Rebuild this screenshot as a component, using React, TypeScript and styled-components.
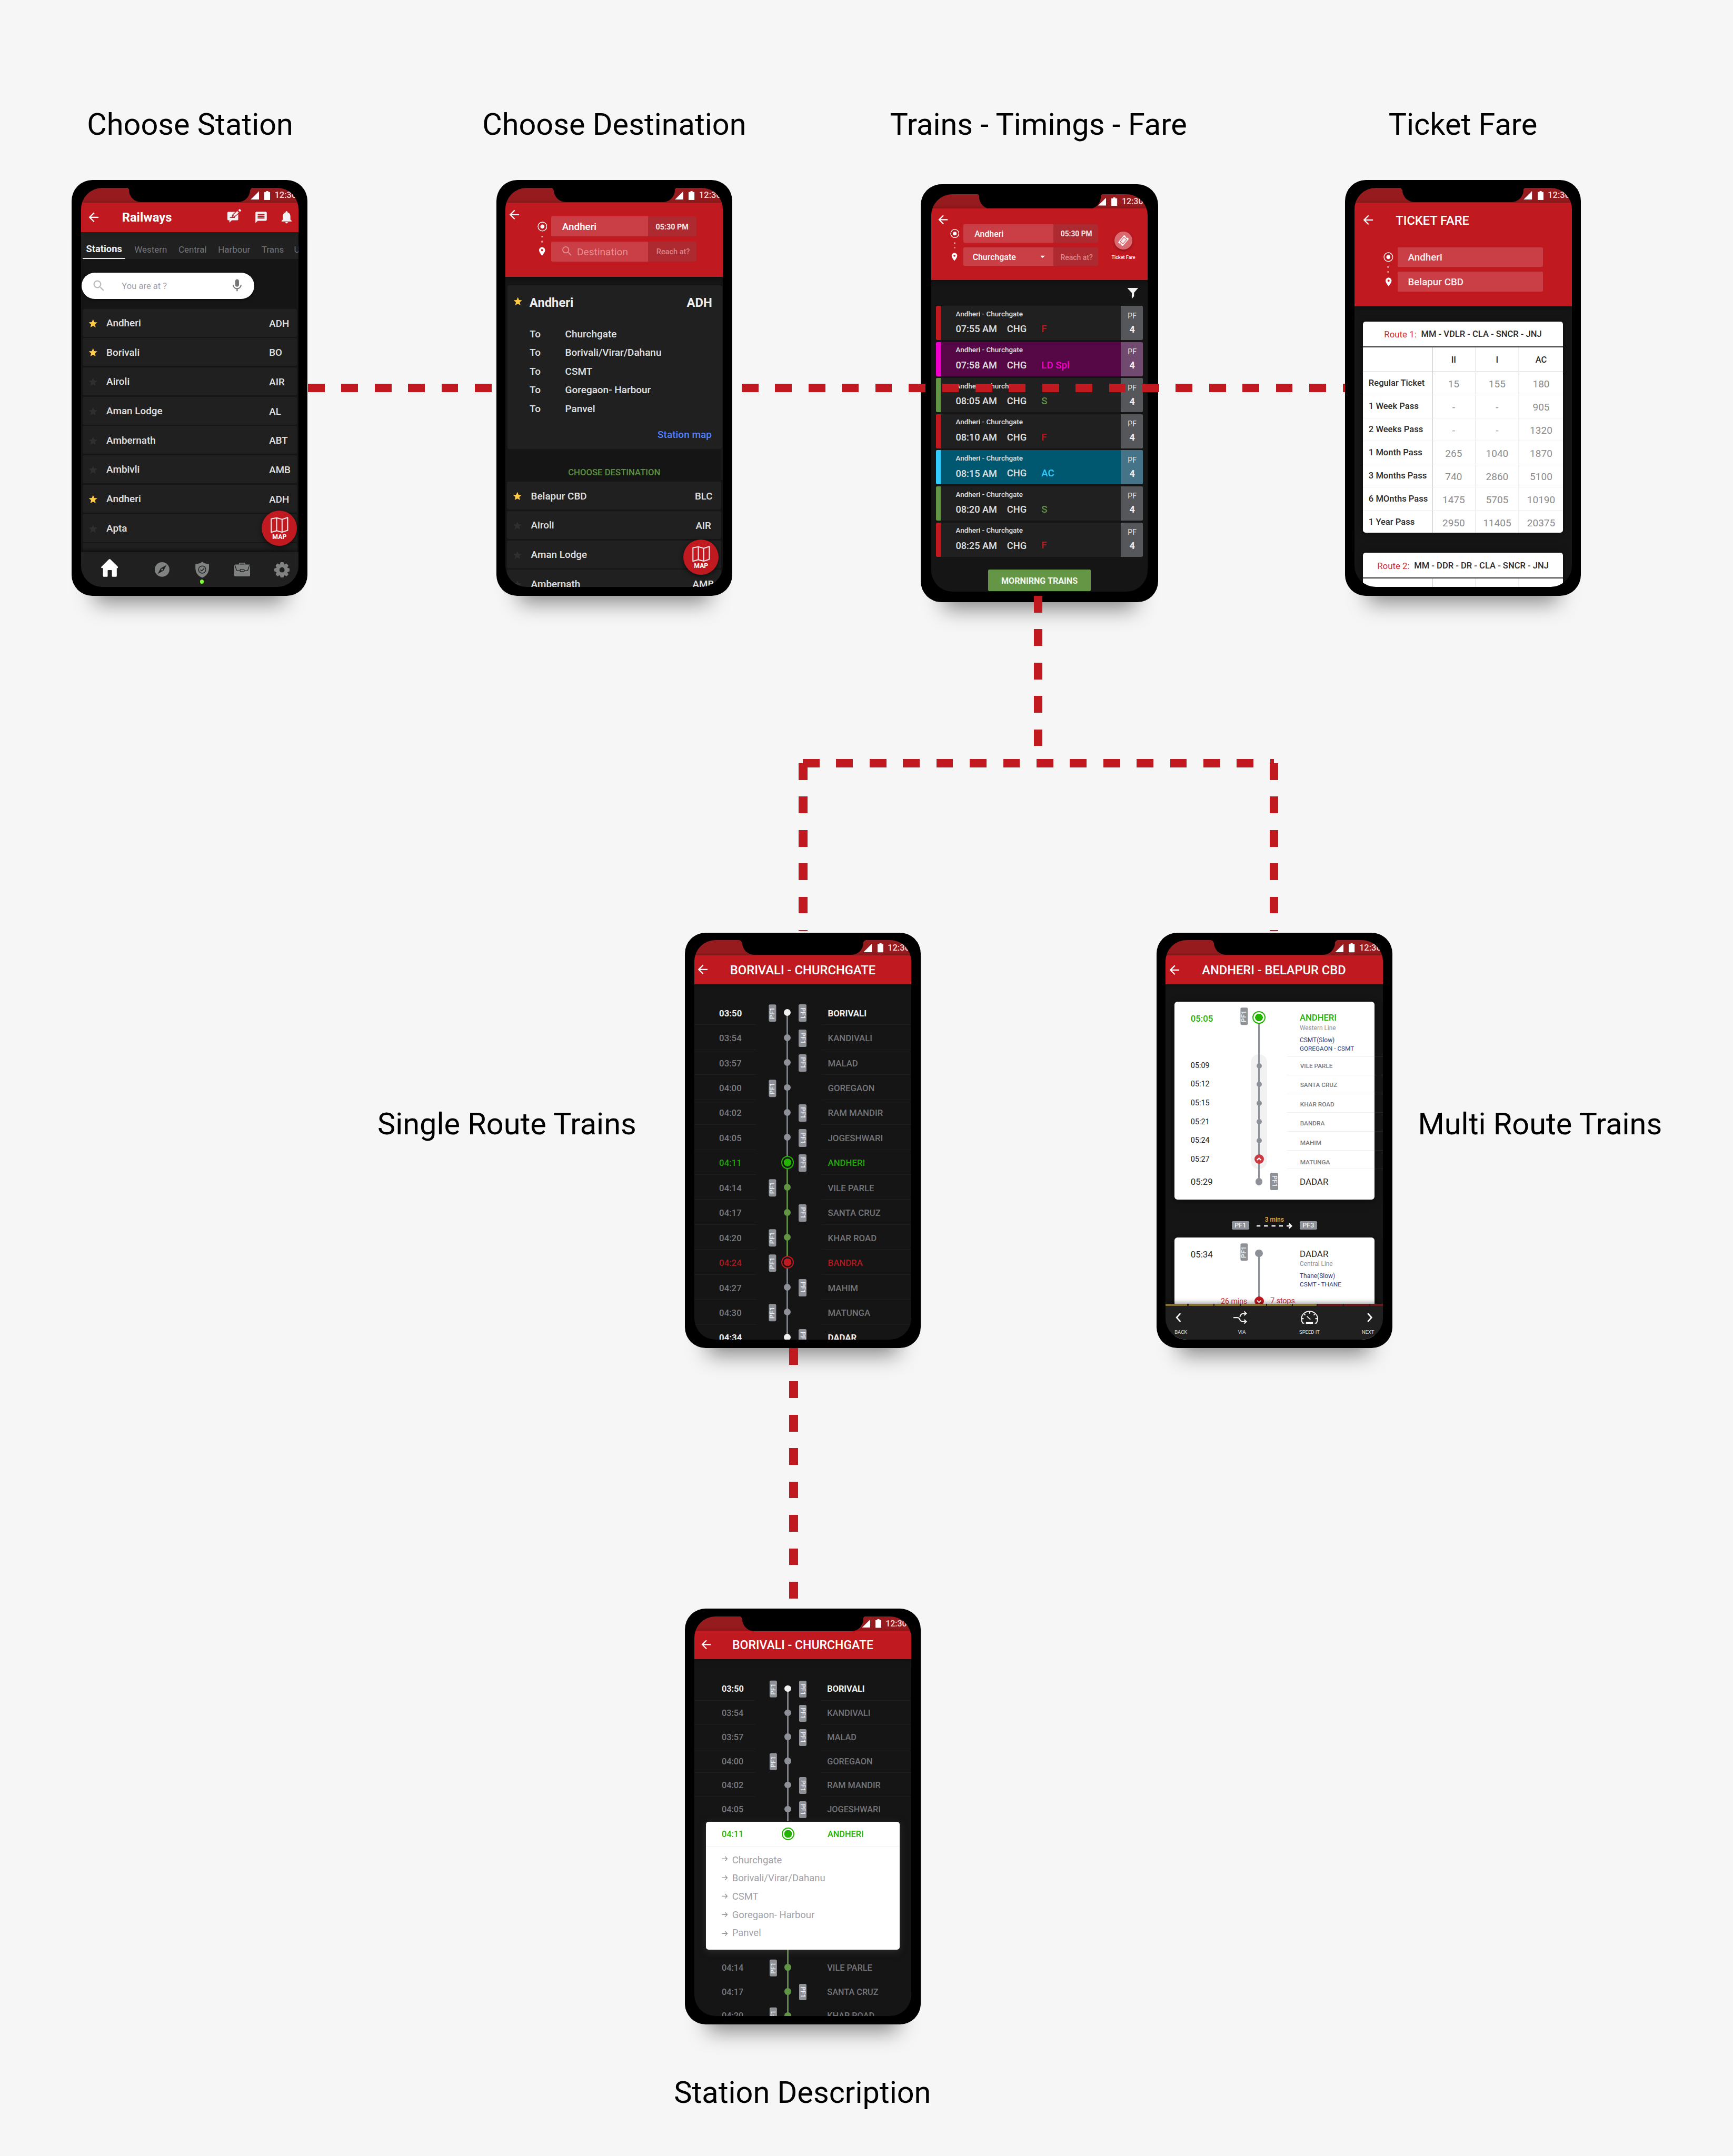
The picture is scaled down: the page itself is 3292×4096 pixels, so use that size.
import React from 'react';
import styled, { createGlobalStyle, css } from 'styled-components';
import {
  MdArrowBack,
  MdArrowDropDown,
  MdMessage,
  MdMic,
  MdNotifications,
  MdPlace,
  MdSearch,
  MdStar,
} from 'react-icons/md';

const RED = '#c01920';
const PANEL = '#202020';
const NIGHT = '#151515';
const GREEN = '#22b400';
const LEAF = '#629445';
const STEEL = '#8f9199';

const GlobalStyle = createGlobalStyle`
  html, body { margin: 0; padding: 0; background: #f6f6f6; }
  * { box-sizing: border-box; }
  svg { display: block; flex: none; }
`;

/* ---------- board ---------- */

const Board = styled.main`
  position: relative;
  width: 4568px;
  height: 5683px;
  zoom: 0.72071;
  overflow: hidden;
  background: #f6f6f6;
  font-family: Roboto, 'Liberation Sans', sans-serif;
`;

const Caption = styled.h2<{ $x: number; $y: number }>`
  position: absolute;
  left: ${(p) => p.$x}px;
  top: ${(p) => p.$y}px;
  transform: translate(-50%, -50%);
  margin: 0;
  font-size: 80px;
  line-height: 1;
  font-weight: 400;
  color: #000;
  white-space: nowrap;
`;

const Connector = styled.div<{ $x: number; $y: number; $len: number; $vertical?: boolean }>`
  position: absolute;
  left: ${(p) => p.$x}px;
  top: ${(p) => p.$y}px;
  width: ${(p) => (p.$vertical ? 23 : p.$len)}px;
  height: ${(p) => (p.$vertical ? p.$len : 23)}px;
  background: repeating-linear-gradient(
    ${(p) => (p.$vertical ? '180deg' : '90deg')},
    ${RED} 0 44px,
    transparent 44px 88px
  );
`;

const Phone = styled.section<{ $x: number; $y: number; $wide?: boolean }>`
  position: absolute;
  left: ${(p) => p.$x}px;
  top: ${(p) => p.$y}px;
  width: ${(p) => (p.$wide ? 625 : 621.5)}px;
  height: ${(p) => (p.$wide ? 1103 : 1096)}px;
  padding: ${(p) => (p.$wide ? '27px 28px' : '20.7px 24.5px')};
  background: #000;
  border-radius: 55px;
  box-shadow: 0 78px 52px -60px rgba(0, 0, 0, 0.45);
`;

const Screen = styled.div<{ $wide?: boolean }>`
  position: relative;
  display: flex;
  flex-direction: column;
  width: ${(p) => (p.$wide ? 569.5 : 573)}px;
  height: ${(p) => (p.$wide ? 1047 : 1053)}px;
  border-radius: 56px;
  overflow: hidden;
  background: ${NIGHT};
`;

const Notch = styled.div`
  position: absolute;
  top: 0;
  left: 126.5px;
  width: 319.5px;
  height: 38.7px;
  background: #000;
  border-radius: 0 0 32px 32px;
  &::before,
  &::after {
    content: '';
    position: absolute;
    top: 0;
    width: 6px;
    height: 6px;
  }
  &::before {
    left: -6px;
    background: radial-gradient(circle at 0 100%, transparent 5.5px, #000 6px);
  }
  &::after {
    right: -6px;
    background: radial-gradient(circle at 100% 100%, transparent 5.5px, #000 6px);
  }
`;

const StatusRow = styled.div<{ $start: number; $h: number }>`
  flex: none;
  display: flex;
  align-items: center;
  height: ${(p) => p.$h}px;
  padding-left: ${(p) => p.$start}px;
  padding-top: 1px;
  background: #961b1e;
`;

const StatusTime = styled.span<{ $size: number }>`
  margin-left: 11.5px;
  padding-top: 1px;
  font-size: ${(p) => p.$size}px;
  line-height: 1;
  font-weight: 500;
  color: #f4dcdd;
  white-space: nowrap;
`;

const Battery = styled.svg`
  margin-left: 14px;
`;

function StatusBar({ start = 446.5, compact = false }: { start?: number; compact?: boolean }) {
  return (
    <StatusRow $start={start} $h={compact ? 37.8 : 39.4}>
      <svg width={compact ? 22 : 22.5} height={compact ? 21.5 : 22.4} viewBox="0 0 22 22" preserveAspectRatio="none">
        <path d="M22 0V22H0Z" fill="#fff" />
      </svg>
      <Battery width={15.5} height={compact ? 23 : 23.8} viewBox="0 0 15.5 24" preserveAspectRatio="none">
        <path d="M1 2.4H5V0H10.5V2.4H14.5Q15.5 2.4 15.5 3.4V23Q15.5 24 14.5 24H1Q0 24 0 23V3.4Q0 2.4 1 2.4Z" fill="#fff" />
      </Battery>
      <StatusTime $size={compact ? 22.2 : 23}>12:30</StatusTime>
    </StatusRow>
  );
}

/* ---------- text ---------- */

const Text = styled.span<{ $s: number; $w?: number; $c?: string; $lh?: number }>`
  display: block;
  flex: none;
  padding-top: 1.7px;
  margin-bottom: -1.7px;
  font-size: ${(p) => p.$s}px;
  line-height: ${(p) => (p.$lh ? `${p.$lh}px` : 1)};
  font-weight: ${(p) => p.$w ?? 500};
  color: ${(p) => p.$c ?? '#e0e0e0'};
  white-space: nowrap;
`;

/* ---------- headers ---------- */

const TitleBar = styled.header<{ $h: number; $pad: number; $gap?: number; $center?: boolean }>`
  position: relative;
  flex: none;
  display: flex;
  align-items: center;
  height: ${(p) => p.$h}px;
  padding-left: ${(p) => p.$pad}px;
  background: ${RED};
  color: #fff;
  box-shadow: 0 2px 10px rgba(0, 0, 0, 0.35);
  ${(p) =>
    p.$center &&
    css`
      justify-content: center;
      padding-left: 0;
      & > svg:first-child {
        position: absolute;
        left: ${p.$pad}px;
      }
    `}
`;

const BarTitle = styled.h3<{ $s: number; $w?: number; $ml?: number }>`
  margin: 0 0 0 ${(p) => p.$ml ?? 0}px;
  padding-top: 3px;
  font-size: ${(p) => p.$s}px;
  line-height: 1;
  font-weight: ${(p) => p.$w ?? 500};
  color: #fff;
  white-space: nowrap;
`;

const BarActions = styled.div`
  display: flex;
  align-items: center;
  margin-left: 147px;
  color: #f2f2f2;
`;

const ActionEdit = styled.svg`
  margin-top: -8px;
`;
const ActionMessage = styled(MdMessage)`
  margin-left: 34px;
`;
const ActionBell = styled(MdNotifications)`
  margin-left: 28.5px;
`;

const SearchHeader = styled.header<{ $h: number }>`
  position: relative;
  z-index: 1;
  flex: none;
  display: flex;
  align-items: flex-start;
  height: ${(p) => p.$h}px;
  background: ${RED};
  color: #fff;
  box-shadow: 0 3px 12px rgba(0, 0, 0, 0.4);
`;

const BackSlot = styled.div<{ $left: number; $top: number }>`
  margin: ${(p) => p.$top}px 0 0 ${(p) => p.$left}px;
`;

const MarkerColumn = styled.div<{ $left: number; $top: number; $k: number }>`
  display: flex;
  flex-direction: column;
  align-items: center;
  flex: none;
  width: ${(p) => 26 * p.$k}px;
  margin: ${(p) => p.$top}px 0 0 ${(p) => p.$left}px;
`;

const MarkerDot = styled.i<{ $mt: number }>`
  width: 5px;
  height: 5px;
  margin-top: ${(p) => p.$mt}px;
  border-radius: 50%;
  background: #e08f92;
`;

const MarkerPin = styled(MdPlace)<{ $mt: number }>`
  margin-top: ${(p) => p.$mt}px;
`;

function Markers({ left, top, k = 1 }: { left: number; top: number; k?: number }) {
  return (
    <MarkerColumn $left={left} $top={top} $k={k}>
      <svg width={26 * k} height={26 * k} viewBox="0 0 26 26">
        <circle cx="13" cy="13" r="11.6" fill="none" stroke="#fff" strokeWidth="1.9" />
        <circle cx="13" cy="13" r="5.3" fill="#fff" />
      </svg>
      <MarkerDot $mt={11.2 * k} />
      <MarkerDot $mt={8 * k} />
      <MarkerPin $mt={10 * k} size={27 * k} />
    </MarkerColumn>
  );
}

const Fields = styled.div<{ $left: number; $top: number; $gap: number }>`
  display: flex;
  flex-direction: column;
  gap: ${(p) => p.$gap}px;
  margin: ${(p) => p.$top}px 0 0 ${(p) => p.$left}px;
`;

const Field = styled.div<{ $h: number }>`
  display: flex;
  height: ${(p) => p.$h}px;
  border-radius: 3px;
  overflow: hidden;
`;

const FieldMain = styled.div<{ $w: number; $pl: number }>`
  display: flex;
  align-items: center;
  width: ${(p) => p.$w}px;
  padding-left: ${(p) => p.$pl}px;
  background: #ca3e45;
  color: #e08a8f;
`;

const FieldSide = styled.div<{ $w: number; $pl: number }>`
  display: flex;
  align-items: center;
  width: ${(p) => p.$w}px;
  padding: 1px 0 0 ${(p) => p.$pl}px;
  background: #ad2a30;
`;

const FieldHint = styled(Text)`
  margin-left: 9px;
`;

const FieldCaret = styled(MdArrowDropDown)`
  margin-left: auto;
  margin-right: 14.5px;
  color: #fff;
`;

/* ---------- screen 1: stations ---------- */

const Tabs = styled.nav`
  flex: none;
  display: flex;
  align-items: stretch;
  gap: 30px;
  height: 71.3px;
  padding-left: 4px;
  background: ${PANEL};
  overflow: hidden;
`;

const Tab = styled.span<{ $active?: boolean; $last?: boolean }>`
  flex: none;
  display: flex;
  align-items: center;
  padding-top: 24px;
  margin-left: ${(p) => (p.$last ? -3 : 0)}px;
  font-size: 23.5px;
  line-height: 1;
  color: #74757b;
  white-space: nowrap;
  ${(p) =>
    p.$active &&
    css`
      width: 112.7px;
      margin-right: -6px;
      padding: 23px 0 0 9.5px;
      border-bottom: 4px solid #e8e8e8;
      font-size: 25.4px;
      font-weight: 700;
      color: #f0f0f0;
    `}
`;

const SearchPill = styled.div`
  flex: none;
  display: flex;
  align-items: center;
  width: 454.7px;
  height: 68.5px;
  margin: 36.3px 0 26.4px 2px;
  padding: 0 25px 0 26px;
  border-radius: 35px;
  background: #fff;
  box-shadow: 0 2px 8px rgba(0, 0, 0, 0.6);
  color: #bdbdbd;
`;

const PillText = styled(Text)`
  margin-left: 41px;
  flex: 1;
`;

const StationList = styled.ul`
  flex: 1 1 0;
  min-height: 0;
  overflow: hidden;
  display: flex;
  flex-direction: column;
  gap: 3.6px;
  margin: 0;
  padding: 0 4px;
  list-style: none;
`;

const StationItem = styled.li`
  flex: none;
  display: flex;
  align-items: center;
  height: 73.7px;
  border-radius: 4px;
  background: ${PANEL};
`;

const StarMark = styled(MdStar)<{ $on?: boolean }>`
  margin: 4px 0 0 14px;
  color: ${(p) => (p.$on ? '#ffca44' : '#2f2f2f')};
`;

const StationName = styled(Text)<{ $ml?: number }>`
  width: ${(p) => p.$ml ?? 429}px;
  margin-left: 22px;
`;

const StationCode = styled(Text)`
  margin-top: 2px;
`;

function Station({ on, name, code, nameWidth }: { on?: boolean; name: string; code: string; nameWidth?: number }) {
  return (
    <StationItem>
      <StarMark size={27} $on={on} />
      <StationName $s={26.2} $ml={nameWidth}>{name}</StationName>
      <StationCode $s={26}>{code}</StationCode>
    </StationItem>
  );
}

const MapButton = styled.button<{ $x: number; $y: number }>`
  position: absolute;
  left: ${(p) => p.$x}px;
  top: ${(p) => p.$y}px;
  display: flex;
  flex-direction: column;
  align-items: center;
  width: 92.8px;
  height: 92.8px;
  padding: 16.5px 0 0;
  border: 0;
  border-radius: 50%;
  background: ${RED};
  box-shadow: 0 4px 14px rgba(0, 0, 0, 0.6);
  font-family: inherit;
  gap: 0;
`;

function MapFab({ x, y }: { x: number; y: number }) {
  return (
    <MapButton $x={x} $y={y}>
      <svg width="47" height="42" viewBox="0 0 47 42" fill="none" stroke="#f6e9ea" strokeWidth="2.8" strokeLinejoin="round">
        <path d="M1.8 5.2L16 2.4L30.3 6.4L45 1.8V35.3L30.3 40.4L16 36.4L1.8 40.6Z" />
        <path d="M16 2.4V36.4M30.3 6.4V40.4" />
      </svg>
      <Text $s={17} $w={700} $c="#fff">MAP</Text>
    </MapButton>
  );
}

const BottomNav = styled.nav`
  position: relative;
  flex: none;
  display: flex;
  align-items: flex-start;
  height: 91.8px;
  padding-left: 52.7px;
  background: ${PANEL};
  box-shadow: 0 -4px 12px rgba(0, 0, 0, 0.65);
`;

const NavIcon = styled.svg<{ $ml: number; $mt: number }>`
  margin: ${(p) => p.$mt}px 0 0 ${(p) => p.$ml}px;
`;

const OnlineDot = styled.i`
  position: absolute;
  left: 314px;
  top: 72.3px;
  width: 10px;
  height: 10px;
  border-radius: 50%;
  background: #7dfb33;
`;

function StationsScreen() {
  return (
    <Screen>
      <StatusBar />
      <TitleBar $h={77.3} $pad={14}>
        <MdArrowBack size={38.5} />
        <BarTitle $s={33} $w={700} $ml={55.5}>Railways</BarTitle>
        <BarActions>
          <ActionEdit width="36.5" height="36.5" viewBox="0 0 36.5 36.5">
            <path d="M2.5 7.5H21L28.5 14V27.5Q28.5 29.7 26.5 29.7H11.5L5.2 36V29.7H2.2Q0 29.7 0 27.5V9.7Q0 7.5 2.5 7.5Z" fill="#f2f2f2" />
            <path d="M6.5 22.6H19.5" stroke={RED} strokeWidth="2" />
            <path d="M12 21.8L14 15.4L26 4L31.4 9.6L19 20.6Z" fill="#f2f2f2" stroke={RED} strokeWidth="2" />
            <path d="M15 15.4L19 19.6" stroke={RED} strokeWidth="1.5" />
            <path d="M28.6 3.1L31.2.6Q32.4-.2 33.4.8L35.6 3Q36.6 4.2 35.6 5.2L33 7.6Z" fill="#f2f2f2" />
          </ActionEdit>
          <ActionMessage size={36} />
          <ActionBell size={40} />
        </BarActions>
      </TitleBar>
      <Tabs>
        <Tab $active>Stations</Tab>
        <Tab>Western</Tab>
        <Tab>Central</Tab>
        <Tab>Harbour</Tab>
        <Tab>Trans</Tab>
        <Tab $last>U</Tab>
      </Tabs>
      <SearchPill>
        <MdSearch size={38.5} />
        <PillText $s={23} $w={400} $c="#9fa0a8">You are at ?</PillText>
        <MdMic size={40} color="#757575" />
      </SearchPill>
      <StationList>
        <Station on name="Andheri" code="ADH" />
        <Station on name="Borivali" code="BO" />
        <Station name="Airoli" code="AIR" />
        <Station name="Aman Lodge" code="AL" />
        <Station name="Ambernath" code="ABT" />
        <Station name="Ambivli" code="AMB" />
        <Station on name="Andheri" code="ADH" />
        <Station name="Apta" code="" />
        <StationItem />
      </StationList>
      <BottomNav>
        <NavIcon $ml={0} $mt={17.6} width="45.3" height="47" viewBox="0 0 45.3 47" fill="#fff">
          <path d="M20.8.8Q22.6-.6 24.4.8L44.6 20.6Q46.2 24 43 24H41.4V44.6Q41.4 47 39 47H30.6Q28.6 47 28.6 45V30.6Q28.6 29 27 29H19Q17.4 29 17.4 30.6V45Q17.4 47 15.4 47H7.4Q5 47 5 44.6V24H2.4Q-1 24 .8 20.6Z" />
        </NavIcon>
        <NavIcon $ml={96.3} $mt={26.4} width="38.6" height="38.6" viewBox="-19.3 -19.3 38.6 38.6">
          <circle r="19.3" fill="#808282" />
          <path d="M11.8-11.6L3.6 3.4L-11.6 11.6L-3.6-3.4Z" fill={PANEL} />
          <circle r="2.4" fill="#808282" />
        </NavIcon>
        <NavIcon $ml={67.8} $mt={24.8} width="36.4" height="42.2" viewBox="0 0 36.4 42.2">
          <path d="M18.2 0C22 4 28 6 35.8 6.2C37.4 22 35 36 18.2 42.2C1.4 36-1 22 .6 6.2C8.4 6 14.4 4 18.2 0Z" fill="#808282" />
          <circle cx="18.2" cy="21" r="9.6" fill="none" stroke={PANEL} strokeWidth="2" />
          <path d="M13.4 21.2L16.8 24.6L23.4 17.8" fill="none" stroke={PANEL} strokeWidth="2.2" />
        </NavIcon>
        <NavIcon $ml={66.8} $mt={27.6} width="41.8" height="36" viewBox="0 0 41.8 36">
          <path d="M13.4 6V3Q13.4 1.2 15.2 1.2H26.4Q28.2 1.2 28.2 3V6" fill="none" stroke="#808282" strokeWidth="2.2" />
          <rect x="0" y="5" width="41.8" height="31" rx="2.4" fill="#808282" />
          <path d="M1.6 6.4L6 19.6Q6.6 21 8 21H15.4M26.4 21H33.8Q35.2 21 35.8 19.6L40.2 6.4" fill="none" stroke={PANEL} strokeWidth="2" />
          <rect x="15.6" y="18" width="10.6" height="5.6" rx="1" fill="#808282" stroke={PANEL} strokeWidth="1.8" />
        </NavIcon>
        <NavIcon $ml={63.4} $mt={25.9} width="40.8" height="40.8" viewBox="-20.4 -20.4 40.8 40.8">
          {[0, 45, 90, 135].map((a) => (
            <path key={a} d="M-4.2-19Q-4-20.4-2.6-20.4H2.6Q4-20.4 4.2-19L6-12V12L4.2 19Q4 20.4 2.6 20.4H-2.6Q-4 20.4-4.2 19L-6 12V-12Z" transform={`rotate(${a})`} fill="#808282" />
          ))}
          <circle r="15.6" fill="#808282" />
          <circle r="6.8" fill={PANEL} />
        </NavIcon>
        <OnlineDot />
      </BottomNav>
      <MapFab x={476.7} y={851.8} />
      <Notch />
    </Screen>
  );
}

/* ---------- screen 2: destination ---------- */

const StationCard = styled.article`
  flex: none;
  height: 431.5px;
  margin: 21.4px 3.6px 0 4.6px;
  border-radius: 5px;
  background: ${PANEL};
`;

const CardHead = styled.div`
  display: flex;
  align-items: center;
  height: 92px;
  padding: 0 25px 0 14.5px;
`;

const HeadStar = styled(MdStar)`
  margin: -5px 17px 0 0;
  color: #ffca44;
`;

const HeadCode = styled(Text)`
  margin-left: auto;
`;

const ToList = styled.dl`
  margin: 11.5px 0 0;
  padding: 0 0 0 58.6px;
`;

const ToRow = styled.div`
  display: flex;
  align-items: center;
  height: 49.4px;
`;

const ToLabel = styled(Text)`
  width: 94px;
`;

const MapLink = styled(Text)`
  margin: 28px 26px 0 0;
  text-align: right;
`;

const SectionLabel = styled(Text)`
  height: 86.9px;
  margin-bottom: 0;
  padding-top: 50.5px;
  text-align: center;
`;

function DestinationScreen() {
  return (
    <Screen>
      <StatusBar />
      <SearchHeader $h={196}>
        <BackSlot $left={4.2} $top={12.4}>
          <MdArrowBack size={38.5} />
        </BackSlot>
        <Markers left={41} top={49.8} />
        <Fields $left={11.1} $top={36.8} $gap={13.4}>
          <Field $h={52.4}>
            <FieldMain $w={255.2} $pl={28.4}>
              <Text $s={26.1} $c="#fff">Andheri</Text>
            </FieldMain>
            <FieldSide $w={127.7} $pl={19.8}>
              <Text $s={19.9} $w={700} $c="#f3e4e5">05:30 PM</Text>
            </FieldSide>
          </Field>
          <Field $h={52.4}>
            <FieldMain $w={255.2} $pl={24.5}>
              <MdSearch size={34} />
              <FieldHint $s={26.6} $w={400} $c="#e58e92">Destination</FieldHint>
            </FieldMain>
            <FieldSide $w={127.7} $pl={21.6}>
              <Text $s={20.1} $c="#dc8488">Reach at?</Text>
            </FieldSide>
          </Field>
        </Fields>
      </SearchHeader>
      <StationCard>
        <CardHead>
          <HeadStar size={27} />
          <Text $s={33} $w={700} $c="#eee">Andheri</Text>
          <HeadCode $s={33} $w={700} $c="#eee">ADH</HeadCode>
        </CardHead>
        <ToList>
          {['Churchgate', 'Borivali/Virar/Dahanu', 'CSMT', 'Goregaon- Harbour', 'Panvel'].map((t) => (
            <ToRow key={t}>
              <ToLabel $s={26.3}>To</ToLabel>
              <Text $s={26.3}>{t}</Text>
            </ToRow>
          ))}
        </ToList>
        <MapLink $s={26.4} $c="#5281ff">Station map</MapLink>
      </StationCard>
      <SectionLabel $s={23.2} $c="#5b9140">CHOOSE DESTINATION</SectionLabel>
      <StationList>
        <Station on name="Belapur CBD" code="BLC" nameWidth={432} />
        <Station name="Airoli" code="AIR" nameWidth={434} />
        <Station name="Aman Lodge" code="" />
        <Station name="Ambernath" code="AMB" nameWidth={426} />
      </StationList>
      <MapFab x={469} y={928} />
      <Notch />
    </Screen>
  );
}

/* ---------- screen 3: trains ---------- */

const TicketLink = styled.div`
  display: flex;
  flex-direction: column;
  align-items: center;
  width: 64px;
  margin: 61px 0 0 34px;
`;

const TicketDisc = styled.div`
  display: grid;
  place-items: center;
  width: 46.6px;
  height: 46.6px;
  margin-bottom: 13.4px;
  border-radius: 50%;
  background: #da6a70;
  box-shadow: 0 3px 8px rgba(0, 0, 0, 0.3);
`;

const FilterRow = styled.div`
  flex: none;
  height: 68.4px;
  padding: 21.4px 0 0 517.6px;
`;

const TrainList = styled.div`
  flex: none;
  display: flex;
  flex-direction: column;
  gap: 4.85px;
  padding: 0 12px;
`;

const TrainRow = styled.div<{ $bar: string; $bg: string }>`
  display: flex;
  height: 90.3px;
  border-left: 13px solid ${(p) => p.$bar};
  border-radius: 3px;
  background: ${(p) => p.$bg};
  overflow: hidden;
`;

const TrainInfo = styled.div`
  flex: 1;
  padding: 10.3px 0 0 39.5px;
`;

const TrainLine = styled.div`
  display: flex;
  align-items: center;
  height: 26px;
  margin-top: 17.7px;
`;

const TrainTime = styled(Text)`
  width: 135px;
`;
const TrainCode = styled(Text)`
  width: 91px;
`;

const PlatformCell = styled.div<{ $bg: string }>`
  display: flex;
  flex-direction: column;
  align-items: center;
  width: 59px;
  padding: 14.3px 0 0 2px;
  gap: 13.8px;
  background: ${(p) => p.$bg};
`;

const MorningButton = styled.button`
  flex: none;
  align-self: center;
  display: flex;
  align-items: center;
  justify-content: center;
  width: 269.5px;
  height: 57px;
  margin-top: 33.6px;
  padding: 2px 0 0;
  border: 0;
  border-radius: 3px;
  background: #649646;
  font-family: inherit;
`;

const kinds = {
  F: { bar: RED, bg: PANEL, pf: '#56575b', label: RED },
  S: { bar: LEAF, bg: PANEL, pf: '#56575b', label: LEAF },
  'LD Spl': { bar: '#ee00ca', bg: '#560745', pf: '#714a70', label: '#ee00ca' },
  AC: { bar: '#33ccff', bg: '#005870', pf: '#457388', label: '#33ccff' },
};

const trains: [string, keyof typeof kinds][] = [
  ['07:55 AM', 'F'],
  ['07:58 AM', 'LD Spl'],
  ['08:05 AM', 'S'],
  ['08:10 AM', 'F'],
  ['08:15 AM', 'AC'],
  ['08:20 AM', 'S'],
  ['08:25 AM', 'F'],
];

function TrainsScreen() {
  return (
    <Screen $wide>
      <StatusBar start={438.8} compact />
      <SearchHeader $h={188.2}>
        <BackSlot $left={12} $top={11.4}>
          <MdArrowBack size={37} />
        </BackSlot>
        <Markers left={0} top={53.8} k={0.93} />
        <Fields $left={10.5} $top={40.9} $gap={11.8}>
          <Field $h={49.4}>
            <FieldMain $w={238} $pl={30}>
              <Text $s={22} $c="#fff">Andheri</Text>
            </FieldMain>
            <FieldSide $w={118.4} $pl={19}>
              <Text $s={19.1} $w={700} $c="#f3e4e5">05:30 PM</Text>
            </FieldSide>
          </Field>
          <Field $h={49.4}>
            <FieldMain $w={238} $pl={25}>
              <Text $s={22.1} $c="#fff">Churchgate</Text>
              <FieldCaret size={29} />
            </FieldMain>
            <FieldSide $w={118.4} $pl={18.6}>
              <Text $s={19.4} $c="#dc8488">Reach at?</Text>
            </FieldSide>
          </Field>
        </Fields>
        <TicketLink>
          <TicketDisc>
            <svg width="28" height="28" viewBox="-14 -14 28 28">
              <g transform="rotate(-50)">
                <path d="M-12.6-8H12.6V-3A3.2 3.2 0 0 0 12.6 3V8H-12.6V3A3.2 3.2 0 0 0-12.6-3Z" fill="#fff" />
                <rect x="-7.6" y="-4.8" width="15.2" height="9.6" fill="#f6e6e7" stroke="#da6a70" strokeWidth="1.8" />
              </g>
            </svg>
          </TicketDisc>
          <Text $s={12.6} $c="#fff">Ticket Fare</Text>
        </TicketLink>
      </SearchHeader>
      <FilterRow>
        <svg width="27" height="28" viewBox="0 0 27 28">
          <path d="M1 0H26Q27.4.2 26.6 1.6L17 12.4V21Q17 22 16.4 22.6L12.6 27Q11 28.4 11 26.6V12.8L.4 1.6Q-.4.2 1 0Z" fill="#f2f2f2" />
        </svg>
      </FilterRow>
      <TrainList>
        {trains.map(([time, kind]) => {
          const k = kinds[kind];
          return (
            <TrainRow key={time} $bar={k.bar} $bg={k.bg}>
              <TrainInfo>
                <Text $s={18.7}>Andheri - Churchgate</Text>
                <TrainLine>
                  <TrainTime $s={25.2}>{time}</TrainTime>
                  <TrainCode $s={25.4}>CHG</TrainCode>
                  <Text $s={26} $c={k.label}>{kind}</Text>
                </TrainLine>
              </TrainInfo>
              <PlatformCell $bg={k.pf}>
                <Text $s={19.5} $w={400}>PF</Text>
                <Text $s={25} $w={700} $c="#eee">4</Text>
              </PlatformCell>
            </TrainRow>
          );
        })}
      </TrainList>
      <MorningButton>
        <Text $s={22.4} $w={700} $c="#f4f8f1">MORNIRNG TRAINS</Text>
      </MorningButton>
      <Notch />
    </Screen>
  );
}

/* ---------- screen 4: fares ---------- */

const FareHeader = styled.header`
  position: relative;
  z-index: 1;
  flex: none;
  height: 274px;
  background: ${RED};
  color: #fff;
  box-shadow: 0 3px 12px rgba(0, 0, 0, 0.4);
`;

const FareTitleRow = styled.div`
  display: flex;
  align-items: center;
  height: 92.8px;
  padding-left: 17.3px;
`;

const FareRoute = styled.div`
  display: flex;
  align-items: flex-start;
`;

const FareCard = styled.article<{ $mt: number }>`
  flex: none;
  height: 557px;
  margin: ${(p) => p.$mt}px 22.9px 0;
  border-radius: 7px;
  background: #fff;
  overflow: hidden;
  box-shadow: 0 0 16px rgba(0, 0, 0, 0.5);
`;

const FareCaption = styled.div`
  display: flex;
  align-items: center;
  justify-content: center;
  gap: 12px;
  height: 68.2px;
  border-bottom: 3px solid #333;
`;

const FareTable = styled.div`
  display: grid;
  grid-template-columns: 183px 115px 114px 1fr;
  grid-template-rows: 65px;
  grid-auto-rows: 61px;
`;

const FareCell = styled.div<{ $head?: boolean; $label?: boolean; $last?: boolean }>`
  display: flex;
  align-items: center;
  justify-content: ${(p) => (p.$label ? 'flex-start' : 'center')};
  padding-left: ${(p) => (p.$label ? 15 : 0)}px;
  padding-bottom: ${(p) => (p.$label ? 2 : 0)}px;
  border-bottom: ${(p) => (p.$head ? '2px solid #b5b5b5' : '2px solid #f2f2f2')};
  border-right: ${(p) => (p.$last ? '0' : p.$label ? '2px solid #979797' : '3px solid #f0f0f0')};
`;

const fares = [
  ['Regular Ticket', '15', '155', '180'],
  ['1 Week Pass', '-', '-', '905'],
  ['2 Weeks Pass', '-', '-', '1320'],
  ['1 Month Pass', '265', '1040', '1870'],
  ['3 Months Pass', '740', '2860', '5100'],
  ['6 MOnths Pass', '1475', '5705', '10190'],
  ['1 Year Pass', '2950', '11405', '20375'],
];

function Fare({ mt, route, path, classes, rows }: { mt: number; route: string; path: string; classes: string[]; rows: string[][] }) {
  return (
    <FareCard $mt={mt}>
      <FareCaption>
        <Text $s={23.4} $w={400} $c="#cf3038">{route}</Text>
        <Text $s={23} $c="#2b2b2b">{path}</Text>
      </FareCaption>
      <FareTable>
        <FareCell $head $label />
        {classes.map((c, i) => (
          <FareCell $head $last={i === 2} key={i}>
            {c && <Text $s={23} $c="#2b2b2b">{c}</Text>}
          </FareCell>
        ))}
        {rows.map((row) => (
          <React.Fragment key={row[0]}>
            <FareCell $label><Text $s={23} $c="#2b2b2b">{row[0]}</Text></FareCell>
            <FareCell><Text $s={26.4} $w={400} $c="#8c8c8c">{row[1]}</Text></FareCell>
            <FareCell><Text $s={26.4} $w={400} $c="#8c8c8c">{row[2]}</Text></FareCell>
            <FareCell $last><Text $s={26.4} $w={400} $c="#8c8c8c">{row[3]}</Text></FareCell>
          </React.Fragment>
        ))}
      </FareTable>
    </FareCard>
  );
}

function FareScreen() {
  return (
    <Screen>
      <StatusBar />
      <FareHeader>
        <FareTitleRow>
          <MdArrowBack size={38.5} />
          <BarTitle $s={32.8} $ml={53.5}>TICKET FARE</BarTitle>
        </FareTitleRow>
        <FareRoute>
          <Markers left={76.8} top={37.3} />
          <Fields $left={11.1} $top={24.8} $gap={13}>
            {['Andheri', 'Belapur CBD'].map((t) => (
              <Field $h={52} key={t}>
                <FieldMain $w={383.3} $pl={27.5}>
                  <Text $s={26.1} $c="#fbeeee">{t}</Text>
                </FieldMain>
              </Field>
            ))}
          </Fields>
        </FareRoute>
      </FareHeader>
      <Fare mt={39.2} route="Route 1:" path="MM - VDLR - CLA - SNCR - JNJ" classes={['II', 'I', 'AC']} rows={fares} />
      <Fare mt={53} route="Route 2:" path="MM - DDR - DR - CLA - SNCR - JNJ" classes={['', '', '']} rows={[]} />
      <Notch />
    </Screen>
  );
}

/* ---------- timeline ---------- */

const Tag = styled.span<{ $up?: boolean; $w?: number; $h?: number }>`
  flex: none;
  display: flex;
  align-items: center;
  justify-content: center;
  width: ${(p) => p.$w ?? 20}px;
  height: ${(p) => p.$h ?? 46}px;
  border-radius: 3.5px;
  background: ${STEEL};
  color: #f0f0f0;
  font-size: ${(p) => ((p.$h ?? 46) < 45 ? 16.8 : 17.6)}px;
  line-height: 1;
  font-weight: 500;
  writing-mode: vertical-rl;
  transform: ${(p) => (p.$up ? 'rotate(180deg)' : 'none')};
`;

const StopRow = styled.div<{ $h: number }>`
  flex: none;
  display: flex;
  align-items: center;
  height: ${(p) => p.$h}px;
`;

const StopTime = styled.div<{ $w: number; $pl: number; $mr: number; $line: boolean }>`
  display: flex;
  align-items: center;
  height: 100%;
  width: ${(p) => p.$w}px;
  margin-right: ${(p) => p.$mr}px;
  padding-top: 2px;
  padding-left: ${(p) => p.$pl}px;
  border-bottom: 2px solid ${(p) => (p.$line ? '#1e1e1e' : 'transparent')};
`;

const StopName = styled(StopTime)`
  flex: 1;
  width: auto;
`;

const TagSlot = styled.div<{ $w: number }>`
  width: ${(p) => p.$w}px;
  padding-top: 3px;
`;

const Track = styled.div<{ $w: number; $h?: number }>`
  position: relative;
  display: flex;
  flex-direction: column;
  align-items: center;
  flex: none;
  width: ${(p) => p.$w}px;
  height: ${(p) => (p.$h ? `${p.$h}px` : '100%')};
`;

const Rail = styled.i<{ $c: string }>`
  flex: 1;
  width: 4.4px;
  background: ${(p) => p.$c};
`;

const Node = styled.i<{ $c: string; $d: number }>`
  position: absolute;
  left: 50%;
  top: 50%;
  width: ${(p) => p.$d}px;
  height: ${(p) => p.$d}px;
  margin: ${(p) => -p.$d / 2}px 0 0 ${(p) => -p.$d / 2}px;
  border-radius: 50%;
  background: ${(p) => p.$c};
`;

const RingNode = styled(Node)<{ $inner: string }>`
  border: 3.2px solid ${(p) => p.$c};
  background: radial-gradient(circle, ${(p) => p.$c} 9.8px, ${(p) => p.$inner} 10.4px);
`;

type Stop = {
  t: string;
  n: string;
  c?: string;
  nc?: string;
  l?: boolean;
  r?: boolean;
  up?: string;
  down?: string;
  dot?: string;
  ring?: boolean;
  bold?: boolean;
};

const GRAYT = '#7a7b80';
const RAILG = '#7d7f86';
const stops: Stop[] = [
  { t: '03:50', n: 'BORIVALI', c: '#efefef', nc: '#efefef', l: true, r: true, up: 'transparent', dot: '#f0f0f0', bold: true },
  { t: '03:54', n: 'KANDIVALI', r: true },
  { t: '03:57', n: 'MALAD', r: true },
  { t: '04:00', n: 'GOREGAON', l: true },
  { t: '04:02', n: 'RAM MANDIR', r: true },
  { t: '04:05', n: 'JOGESHWARI', r: true },
  { t: '04:11', n: 'ANDHERI', c: '#22a80a', nc: '#22a80a', r: true, down: '#5d8b45', dot: GREEN, ring: true },
  { t: '04:14', n: 'VILE PARLE', l: true, up: '#5d8b45', down: '#5d8b45', dot: LEAF },
  { t: '04:17', n: 'SANTA CRUZ', r: true, up: '#5d8b45', down: '#5d8b45', dot: LEAF },
  { t: '04:20', n: 'KHAR ROAD', l: true, up: '#5d8b45', down: '#5d8b45', dot: LEAF },
  { t: '04:24', n: 'BANDRA', c: '#b01a20', nc: '#b01a20', l: true, up: '#5d8b45', dot: RED, ring: true },
  { t: '04:27', n: 'MAHIM', r: true },
  { t: '04:30', n: 'MATUNGA', l: true },
  { t: '04:34', n: 'DADAR', c: '#efefef', nc: '#efefef', r: true, dot: '#f0f0f0', bold: true },
];

const regular = { h: 65.83, tw: 164, tp: 66, mr: 31.9, tagL: 20, track: 60.2, tagR: 20, gap: 40, np: 16.4, s: 23.3, d: 18, tagH: 46 };
const compactDims = { h: 63.5, tw: 160, tp: 72.7, mr: 38.8, tagL: 19.3, track: 58.3, tagR: 19.7, gap: 38.7, np: 16, s: 22.6, d: 17.5, tagH: 44 };

const TagGap = styled.i<{ $w: number }>`
  flex: none;
  width: ${(p) => p.$w}px;
`;

function StopLine({ stop, dims, line = true }: { stop: Stop; dims: typeof regular; line?: boolean }) {
  const weight = stop.bold ? 700 : 500;
  return (
    <StopRow $h={dims.h}>
      <StopTime $w={dims.tw} $pl={dims.tp} $mr={dims.mr} $line={line}>
        <Text $s={dims.s} $w={weight} $c={stop.c ?? GRAYT}>{stop.t}</Text>
      </StopTime>
      <TagSlot $w={dims.tagL}>{stop.l && <Tag $up $w={dims.tagL} $h={dims.tagH}>PF1</Tag>}</TagSlot>
      <Track $w={dims.track}>
        <Rail $c={stop.up ?? RAILG} />
        <Rail $c={stop.down ?? RAILG} />
        {stop.ring ? (
          <RingNode $c={stop.dot!} $inner={NIGHT} $d={34} />
        ) : (
          <Node $c={stop.dot ?? STEEL} $d={dims.d} />
        )}
      </Track>
      <TagSlot $w={dims.tagR}>{stop.r && <Tag $w={dims.tagR} $h={dims.tagH}>PF1</Tag>}</TagSlot>
      <TagGap $w={dims.gap} />
      <StopName $w={0} $pl={dims.np} $mr={0} $line={line}>
        <Text $s={dims.s} $w={weight} $c={stop.nc ?? '#737478'}>{stop.n}</Text>
      </StopName>
    </StopRow>
  );
}

const Stops = styled.div<{ $pt: number }>`
  flex: 1 1 0;
  min-height: 0;
  overflow: hidden;
  display: flex;
  flex-direction: column;
  padding-top: ${(p) => p.$pt}px;
`;

function SingleRouteScreen() {
  return (
    <Screen>
      <StatusBar />
      <TitleBar $h={76.4} $pad={4} $center>
        <MdArrowBack size={38.5} />
        <BarTitle $s={33}>BORIVALI - CHURCHGATE</BarTitle>
      </TitleBar>
      <Stops $pt={41.8}>
        {stops.map((s) => (
          <StopLine key={s.t} stop={s} dims={regular} />
        ))}
      </Stops>
      <Notch />
    </Screen>
  );
}

/* ---------- screen 7: station description ---------- */

const Popover = styled.article`
  flex: none;
  height: 337.2px;
  margin: 1.2px 31.8px 0;
  border-radius: 7px;
  background: #fff;
  box-shadow: 0 3px 18px rgba(70, 70, 70, 0.5);
`;

const PopHead = styled.div`
  display: flex;
  align-items: center;
  height: 66.4px;
  padding-left: 41px;
  border-bottom: 2px solid #f0f0f0;
`;

const PopTime = styled(Text)`
  width: 141px;
`;

const PopName = styled(Text)`
  margin-left: 71px;
`;

const PopBody = styled.div`
  display: flex;
  gap: 12px;
  padding: 9.4px 0 0 40.5px;
`;

const PopArrows = styled.div`
  display: grid;
  grid-auto-rows: 49.2px;
  align-items: center;
  margin-top: -2px;
`;

const PopNames = styled.div`
  display: grid;
  grid-auto-rows: 48.1px;
  align-items: center;
`;

function DescriptionScreen() {
  const places = ['Churchgate', 'Borivali/Virar/Dahanu', 'CSMT', 'Goregaon- Harbour', 'Panvel'];
  return (
    <Screen>
      <StatusBar start={441.6} compact />
      <TitleBar $h={74.4} $pad={13.4} $center>
        <MdArrowBack size={37} />
        <BarTitle $s={32}>BORIVALI - CHURCHGATE</BarTitle>
      </TitleBar>
      <Stops $pt={46.8}>
        {stops.slice(0, 6).map((s, i) => (
          <StopLine key={s.t} stop={s} dims={compactDims} line={i < 5} />
        ))}
        <Popover>
          <PopHead>
            <PopTime $s={22.6} $c={GREEN}>04:11</PopTime>
            <Track $w={67} $h={34}>
              <RingNode $c={GREEN} $inner="#fff" $d={33} />
            </Track>
            <PopName $s={22.6} $c={GREEN}>ANDHERI</PopName>
          </PopHead>
          <PopBody>
            <PopArrows>
              {places.map((p) => (
                <svg key={p} width="16" height="15" viewBox="0 0 16 15" fill="none" stroke="#8b8b8f" strokeWidth="1.7">
                  <path d="M0.5 7.5H14.5M8.6 1.4L14.7 7.5L8.6 13.6" />
                </svg>
              ))}
            </PopArrows>
            <PopNames>
              {places.map((p) => (
                <Text key={p} $s={25.6} $w={400} $c="#a0a1a8">{p}</Text>
              ))}
            </PopNames>
          </PopBody>
        </Popover>
        <StopRow $h={15.5}>
          <TagGap $w={218.1} />
          <Track $w={58.3}>
            <Rail $c="#5d8b45" />
          </Track>
        </StopRow>
        {stops.slice(7, 10).map((s) => (
          <StopLine key={s.t} stop={s} dims={compactDims} line={false} />
        ))}
      </Stops>
      <Notch />
    </Screen>
  );
}

/* ---------- screen 6: multi route ---------- */

const LegCard = styled.article<{ $h: number; $mt: number }>`
  flex: none;
  display: flex;
  align-items: flex-start;
  height: ${(p) => p.$h}px;
  margin: ${(p) => p.$mt}px 23.2px 0;
  border-radius: 8px;
  background: #fff;
  box-shadow: 0 3px 18px rgba(0, 0, 0, 0.5);
`;

const LegTimes = styled.div`
  width: 172.7px;
  padding: 30.2px 0 0 42.6px;
`;

const LegHeadTime = styled(Text)`
  margin-bottom: 84.6px;
`;

const LateText = styled(Text)`
  margin-left: 79.5px;
`;

const LegTag = styled.div<{ $mt: number }>`
  width: 20px;
  padding-top: ${(p) => p.$mt}px;
`;

const LegTrack = styled.div`
  position: relative;
  width: 60px;
`;

const LegRail = styled.i<{ $h: number }>`
  position: absolute;
  z-index: 1;
  left: 28px;
  top: 42px;
  width: 4px;
  height: ${(p) => p.$h}px;
  background: ${STEEL};
`;

const NodeCell = styled.div<{ $h: number; $mb?: number }>`
  position: relative;
  z-index: 2;
  display: grid;
  place-items: center;
  height: ${(p) => p.$h}px;
  margin-bottom: ${(p) => p.$mb ?? 0}px;
`;

const Dot = styled.i<{ $d: number; $c?: string }>`
  display: grid;
  place-items: center;
  width: ${(p) => p.$d}px;
  height: ${(p) => p.$d}px;
  border-radius: 50%;
  background: ${(p) => p.$c ?? STEEL};
`;

const LegRing = styled(Dot)`
  border: 3.2px solid ${GREEN};
  background: radial-gradient(circle, ${GREEN} 9.8px, #fff 10.4px);
`;

const Capsule = styled.div`
  width: 42px;
  height: 301.3px;
  margin: 0 auto;
  padding-top: 5.2px;
  border-radius: 21px;
  background: #f2f2f2;
`;

const LegNames = styled.div`
  flex: 1;
  margin: 0 -23.2px 0 24.4px;
`;

const LegHeadNames = styled.div<{ $line?: boolean }>`
  height: 145.5px;
  padding: 29.6px 0 0 33px;
  border-bottom: 2px solid ${(p) => (p.$line ? 'rgba(140, 140, 140, 0.13)' : 'transparent')};
`;

const RouteName = styled(Text)`
  margin-top: 7.2px;
`;

const LegName = styled.div<{ $shift: number }>`
  display: flex;
  align-items: center;
  height: 49.4px;
  padding: ${(p) => p.$shift}px 0 0 34px;
  border-bottom: 2px solid rgba(140, 140, 140, 0.13);
`;

const LegEnd = styled.div`
  display: flex;
  align-items: center;
  height: 65px;
  padding-left: 33px;
`;

const Transfer = styled.div`
  flex: none;
  display: flex;
  align-items: flex-end;
  justify-content: center;
  height: 79.1px;
  gap: 19.5px;
`;

const FlatTag = styled.span`
  display: grid;
  place-items: center;
  width: 46px;
  height: 21px;
  padding-top: 1px;
  border-radius: 3px;
  background: ${STEEL};
  font-size: 17.6px;
  line-height: 1;
  font-weight: 500;
  color: #f0f0f0;
`;

const Walk = styled.div`
  display: flex;
  flex-direction: column;
  align-items: center;
  gap: 2px;
  width: 94px;
  padding-bottom: 2.4px;
`;

const RouteNav = styled.nav`
  position: absolute;
  left: 0;
  right: 0;
  bottom: 0;
  height: 95.3px;
  background: ${PANEL};
  box-shadow: 0 -3px 12px rgba(0, 0, 0, 0.4);
  z-index: 3;
`;

const ProgressStrip = styled.div`
  display: flex;
  gap: 3px;
  height: 5.6px;
  background: ${PANEL};
`;

const ProgressPart = styled.i<{ $w: number; $late?: boolean }>`
  flex: none;
  width: ${(p) => p.$w}px;
  background: ${(p) => (p.$late ? '#6b1a1e' : '#857033')};
`;

const RouteActions = styled.div`
  display: flex;
  height: 90px;
`;

const RouteAction = styled.div<{ $ml: number }>`
  flex: none;
  display: flex;
  flex-direction: column;
  align-items: center;
  justify-content: space-between;
  width: 80px;
  height: 76px;
  margin-left: ${(p) => p.$ml}px;
  padding-bottom: 1.6px;
`;

const ActionIcon = styled.div<{ $shift?: number }>`
  display: grid;
  place-items: center;
  height: 69px;
  margin-left: ${(p) => p.$shift ?? 0}px;
`;

const FAINT = '#77787b';

function MultiRouteScreen() {
  return (
    <Screen>
      <StatusBar />
      <TitleBar $h={76.6} $pad={4} $center>
        <MdArrowBack size={38.5} />
        <BarTitle $s={32.8} $ml={-2.5}>ANDHERI - BELAPUR CBD</BarTitle>
      </TitleBar>
      <LegCard $h={521.4} $mt={45.5}>
        <LegTimes>
          <LegHeadTime $s={23.3} $c={GREEN} $lh={26}>05:05</LegHeadTime>
          {['05:09', '05:12', '05:15', '05:21', '05:24', '05:27'].map((t) => (
            <Text key={t} $s={20} $w={400} $c="#222" $lh={49.4}>{t}</Text>
          ))}
          <Text $s={23.4} $c="#2b2b2b" $w={400} $lh={70}>05:29</Text>
        </LegTimes>
        <LegTag $mt={15.3}><Tag $up>PF1</Tag></LegTag>
        <LegTrack>
          <LegRail $h={432} />
          <NodeCell $h={84.2} $mb={55.5}><LegRing $d={34} /></NodeCell>
          <Capsule>
            {[0, 1, 2, 3, 4].map((i) => (
              <NodeCell key={i} $h={49.2}><Dot $d={14} /></NodeCell>
            ))}
            <NodeCell $h={49.2}>
              <Dot $d={25} $c="#cb3b43">
                <svg width="13" height="8" viewBox="0 0 13 8" fill="none" stroke="#fff" strokeWidth="3">
                  <path d="M1 7L6.5 1.8L12 7" />
                </svg>
              </Dot>
            </NodeCell>
          </Capsule>
          <NodeCell $h={67.4}><Dot $d={18.5} /></NodeCell>
        </LegTrack>
        <LegTag $mt={451.2}><Tag>PF1</Tag></LegTag>
        <LegNames>
          <LegHeadNames $line>
            <Text $s={23.1} $c={GREEN} $lh={26}>ANDHERI</Text>
            <Text $s={16.5} $w={400} $c="#8d8e94" $lh={25.4}>Western Line</Text>
            <RouteName $s={16.6} $w={400} $c="#2c3a78" $lh={23}>CSMT(Slow)</RouteName>
            <Text $s={16.4} $w={400} $c="#2c3a78" $lh={23}>GOREGAON - CSMT</Text>
          </LegHeadNames>
          <LegName $shift={0}><Text $s={16.4} $c={FAINT}>VILE PARLE</Text></LegName>
          <LegName $shift={0}><Text $s={16.4} $c={FAINT}>SANTA CRUZ</Text></LegName>
          <LegName $shift={3.6}><Text $s={16.4} $c={FAINT}>KHAR ROAD</Text></LegName>
          <LegName $shift={6.6}><Text $s={16.4} $c={FAINT}>BANDRA</Text></LegName>
          <LegName $shift={9.4}><Text $s={16.4} $c={FAINT}>MAHIM</Text></LegName>
          <LegName $shift={12.2}><Text $s={16.4} $c={FAINT}>MATUNGA</Text></LegName>
          <LegEnd><Text $s={23.5} $w={400} $c="#2b2b2b">DADAR</Text></LegEnd>
        </LegNames>
      </LegCard>
      <Transfer>
        <FlatTag>PF1</FlatTag>
        <Walk>
          <Text $s={16.6} $c="#e3b63c">3 mins</Text>
          <svg width="94" height="14" viewBox="0 0 94 14" fill="none" stroke="#fff" strokeWidth="3.6">
            <path d="M0 7H10M19.6 7H29.8M39.6 7H49.8M59.2 7H69.4M79.2 7H91" />
            <path d="M85.4 .8L92 7L85.4 13.2" />
          </svg>
        </Walk>
        <FlatTag>PF3</FlatTag>
      </Transfer>
      <LegCard $h={300} $mt={21.2}>
        <LegTimes>
          <LegHeadTime $s={23.4} $w={400} $c="#2b2b2b" $lh={26}>05:34</LegHeadTime>
          <LateText $s={19.6} $w={400} $c="#cf3038" $lh={49}>26 mins</LateText>
        </LegTimes>
        <LegTag $mt={15.3}><Tag $up>PF1</Tag></LegTag>
        <LegTrack>
          <LegRail $h={126} />
          <NodeCell $h={84.2} $mb={59.6}><Dot $d={20} /></NodeCell>
          <NodeCell $h={50}>
            <Dot $d={25} $c={RED}>
              <svg width="13" height="8" viewBox="0 0 13 8" fill="none" stroke="#fff" strokeWidth="3">
                <path d="M1 1L6.5 6.2L12 1" />
              </svg>
            </Dot>
          </NodeCell>
        </LegTrack>
        <LegTag $mt={140.6}>
          <Text $s={19.7} $w={400} $c="#cf3038" $lh={50}>7 stops</Text>
        </LegTag>
        <LegNames>
          <LegHeadNames>
            <Text $s={23.5} $w={400} $c="#2b2b2b" $lh={26}>DADAR</Text>
            <Text $s={16.5} $w={400} $c="#8d8e94" $lh={25.4}>Central Line</Text>
            <RouteName $s={16.6} $w={400} $c="#2c3a78" $lh={23}>Thane(Slow)</RouteName>
            <Text $s={16.4} $w={400} $c="#2c3a78" $lh={23}>CSMT - THANE</Text>
          </LegHeadNames>
        </LegNames>
      </LegCard>
      <RouteNav>
        <ProgressStrip>
          {[57, 66, 66, 66, 66, 62].map((w, i) => (
            <ProgressPart key={i} $w={w} />
          ))}
          {[66, 66, 40].map((w, i) => (
            <ProgressPart key={i} $w={w} $late />
          ))}
        </ProgressStrip>
        <RouteActions>
          <RouteAction $ml={0}>
            <ActionIcon $shift={-12}>
              <svg width="16" height="25" viewBox="0 0 16 25" fill="none" stroke="#fff" strokeWidth="3.6">
                <path d="M13 1.6L3 12.5L13 23.4" />
              </svg>
            </ActionIcon>
            <Text $s={13.1} $w={400}>BACK</Text>
          </RouteAction>
          <RouteAction $ml={80.8}>
            <ActionIcon $shift={-7}>
              <svg width="37" height="34" viewBox="0 0 37 34" fill="none" stroke="#eee" strokeWidth="3">
                <path d="M0 16.8H11Q14 16.8 16 20.4Q19.5 27.4 24 27.4H33" />
                <path d="M17 14.6Q20 6 26.5 6H33" />
                <path d="M28.4 .8L34 6L28.4 11.2M28.4 22.2L34 27.4L28.4 32.6" />
              </svg>
            </ActionIcon>
            <Text $s={13.1} $w={400}>VIA</Text>
          </RouteAction>
          <RouteAction $ml={98.2}>
            <ActionIcon>
              <svg width="46" height="36" viewBox="0 0 46 36" fill="none" stroke="#eee" strokeWidth="2.8">
                <path d="M9 33H5.4Q1.6 28.4 1.6 21.6A21.4 20 0 0 1 44.4 21.6Q44.4 28.4 40.6 33H37" />
                <path d="M23 2V8M2 21H7.6M44 21H38.4M8.2 8.2L12 12M37.8 8.2L34 12" />
                <path d="M16 14.6L25.4 23.4" strokeWidth="2.4" />
                <rect x="13.6" y="30" width="18.6" height="4.8" fill="#fff" stroke="none" />
              </svg>
            </ActionIcon>
            <Text $s={13.1} $w={400}>SPEED IT</Text>
          </RouteAction>
          <RouteAction $ml={74}>
            <ActionIcon $shift={10}>
              <svg width="16" height="25" viewBox="0 0 16 25" fill="none" stroke="#fff" strokeWidth="3.6">
                <path d="M3 1.6L13 12.5L3 23.4" />
              </svg>
            </ActionIcon>
            <Text $s={13.1} $w={400}>NEXT</Text>
          </RouteAction>
        </RouteActions>
      </RouteNav>
      <Notch />
    </Screen>
  );
}

export default function App() {
  return (
    <>
      <GlobalStyle />
      <Board>
        <Caption $x={501} $y={328.5}>Choose Station</Caption>
        <Caption $x={1619} $y={328.5}>Choose Destination</Caption>
        <Caption $x={2737} $y={328.5}>Trains - Timings - Fare</Caption>
        <Caption $x={3856} $y={328.5}>Ticket Fare</Caption>
        <Caption $x={1336} $y={2964}>Single Route Trains</Caption>
        <Caption $x={4059} $y={2964}>Multi Route Trains</Caption>
        <Caption $x={2115} $y={5517}>Station Description</Caption>

        <Phone $x={189} $y={474}><StationsScreen /></Phone>
        <Phone $x={1308} $y={474}><DestinationScreen /></Phone>
        <Phone $x={2427} $y={485} $wide><TrainsScreen /></Phone>
        <Phone $x={3545} $y={474}><FareScreen /></Phone>
        <Phone $x={1805} $y={2458}><SingleRouteScreen /></Phone>
        <Phone $x={3048} $y={2458}><MultiRouteScreen /></Phone>
        <Phone $x={1805} $y={4240}><DescriptionScreen /></Phone>

        <Connector $x={811.5} $y={1011} $len={496.5} />
        <Connector $x={1955.3} $y={1011} $len={1589.7} />
        <Connector $vertical $x={2725} $y={1570} $len={396} />
        <Connector $x={2116} $y={2000.5} $len={1242} />
        <Connector $vertical $x={2105} $y={2012} $len={442} />
        <Connector $vertical $x={3346.5} $y={2012} $len={442} />
        <Connector $vertical $x={2080.5} $y={3554} $len={660} />
      </Board>
    </>
  );
}
